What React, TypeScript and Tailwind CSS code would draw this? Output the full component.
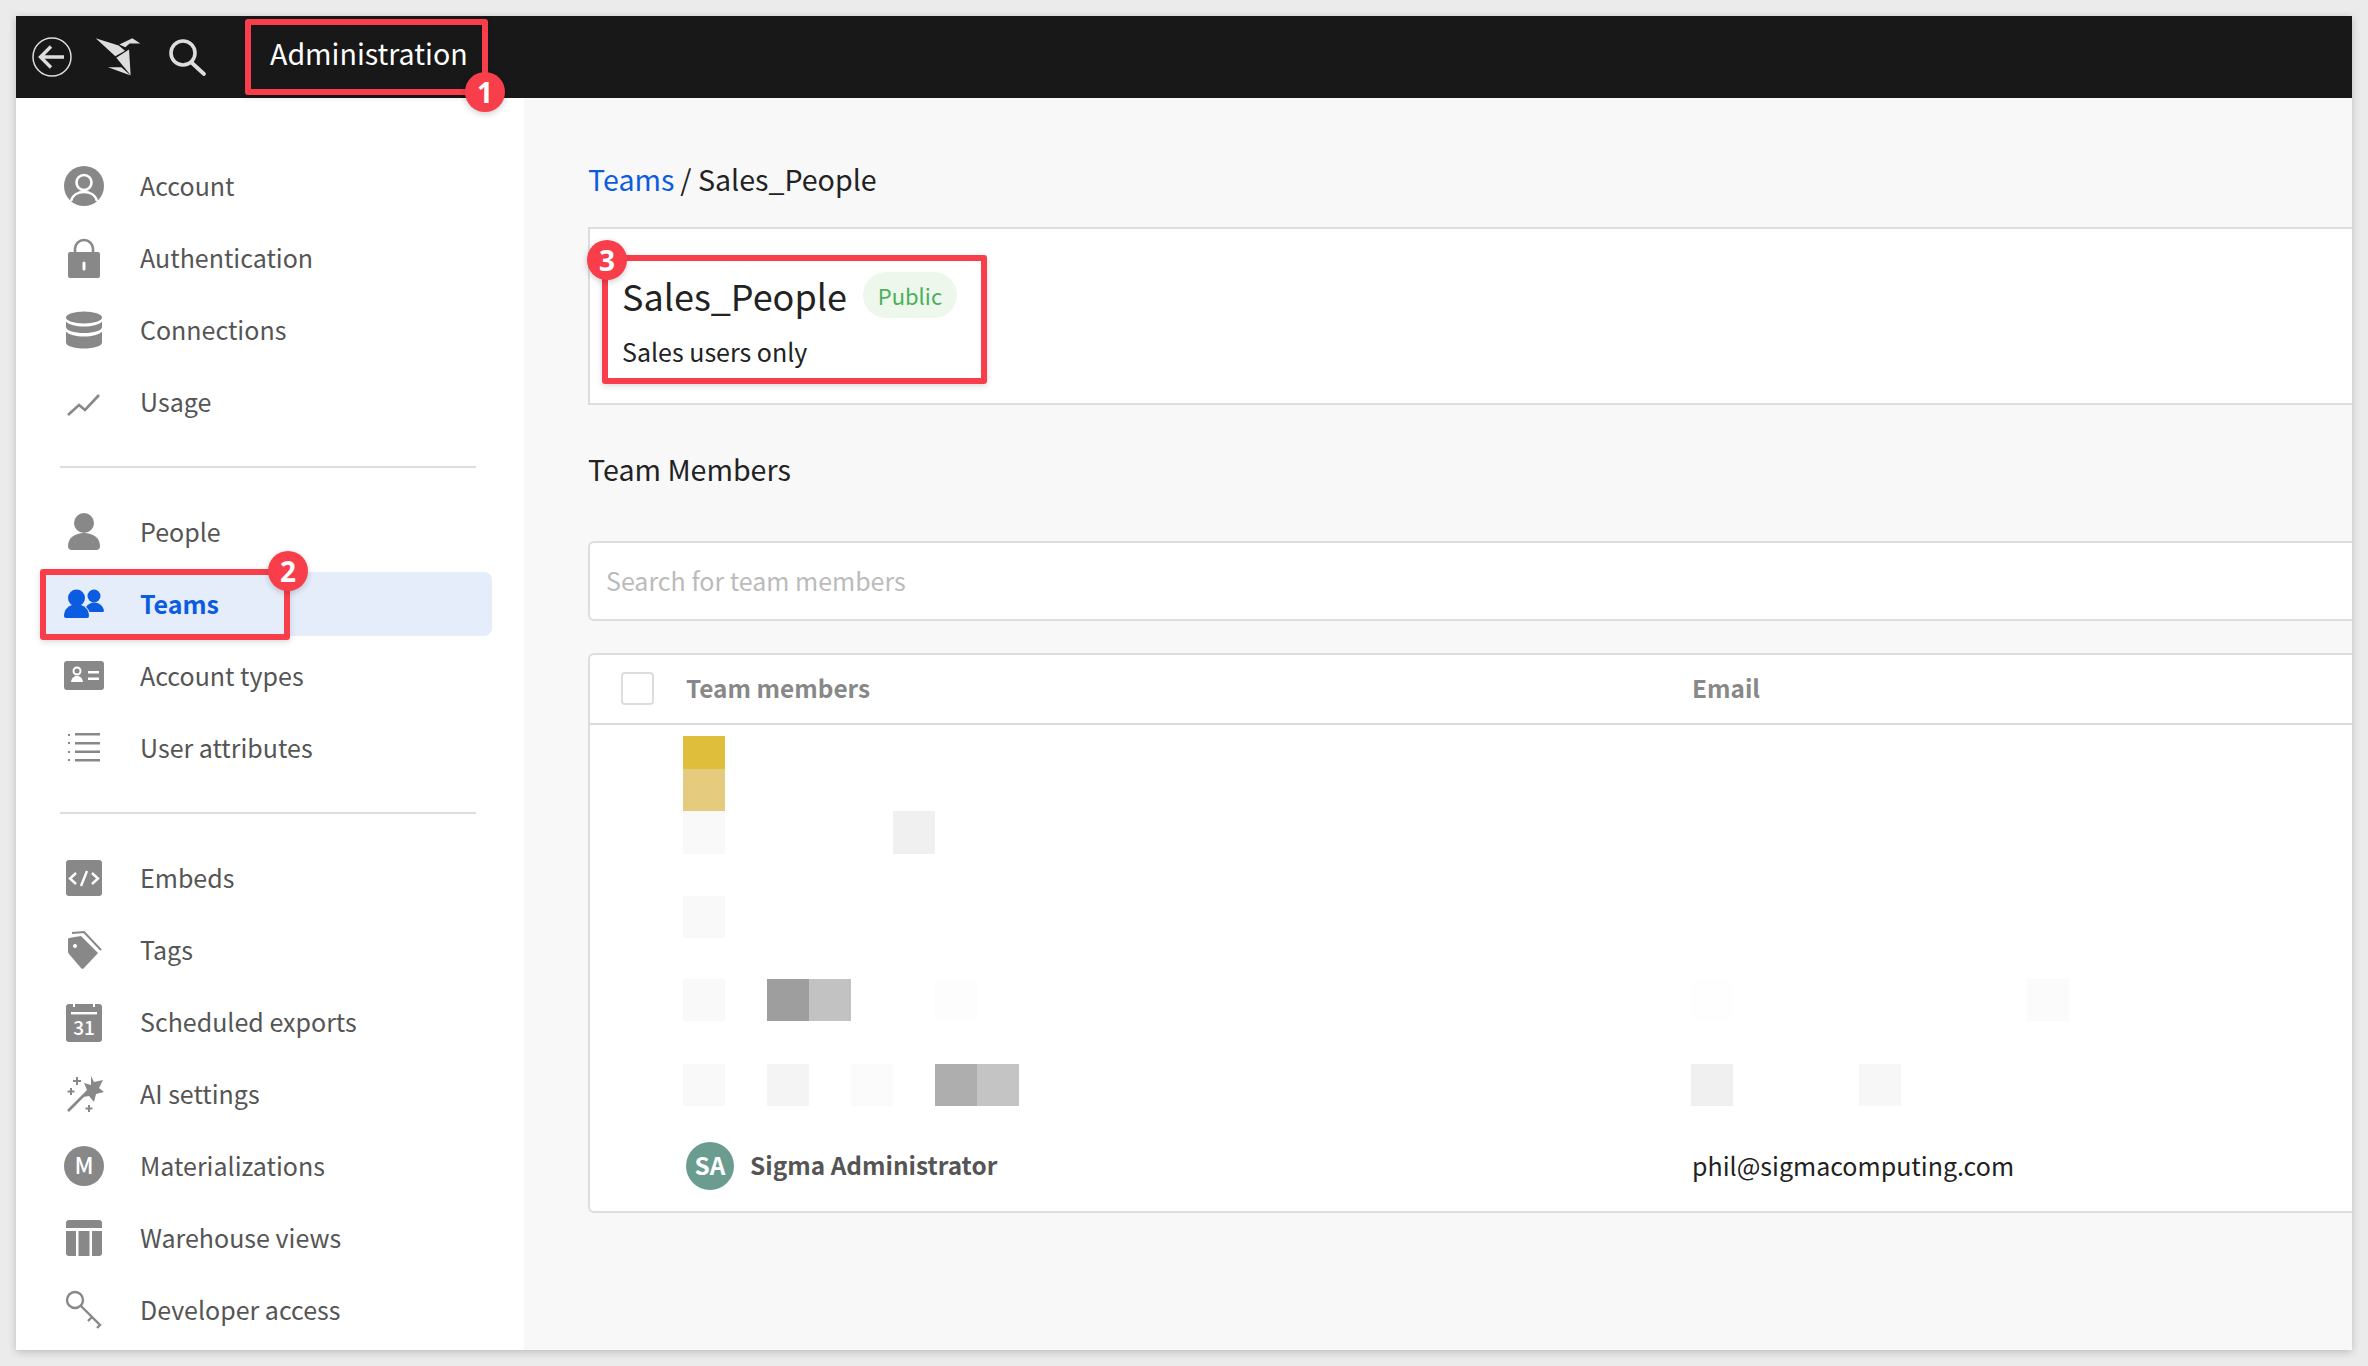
import type { ReactNode } from "react";

const FONT = "font-['Noto_Sans_CJK_SC','Source_Sans_Pro',sans-serif]";

function Ico({ children, h = 40 }: { children: ReactNode; h?: number }) {
  return (
    <svg width="40" height={h} viewBox={`0 0 40 ${h}`} className="shrink-0">
      {children}
    </svg>
  );
}

const GREY = "#888888";
const BLUE = "#0b5ce1";

const AccountIcon = () => (
  <Ico>
    <circle cx="20" cy="20" r="20" fill={GREY} />
    <circle cx="20" cy="16.5" r="7.5" fill="none" stroke="#fff" strokeWidth="2.6" />
    <path d="M7 35c1.5-6 7-9 13-9s11.500 3 13 9" fill="none" stroke="#fff" strokeWidth="2.6" />
  </Ico>
);

const LockIcon = () => (
  <Ico>
    <path d="M11 18v-7a9 9 0 0 1 18 0v7" fill="none" stroke={GREY} strokeWidth="2.6" />
    <path
      fillRule="evenodd"
      d="M6 14h28a2 2 0 0 1 2 2v22a2 2 0 0 1-2 2H6a2 2 0 0 1-2-2V16a2 2 0 0 1 2-2zm12.500 11v6a1.500 1.500 0 0 0 3 0v-6a1.500 1.500 0 0 0-3 0z"
      fill={GREY}
    />
  </Ico>
);

const DbIcon = () => (
  <Ico>
    <ellipse cx="20" cy="7.500" rx="18" ry="6" fill={GREY} />
    <path d="M2 11.500c3 3.500 10 5 18 5s15-1.500 18-5v5.500c0 3.500-8 6-18 6s-18-2.500-18-6z" fill={GREY} />
    <path d="M2 21.500c3 3.500 10 5 18 5s15-1.500 18-5v11c0 3.500-8 6-18 6s-18-2.500-18-6z" fill={GREY} />
  </Ico>
);

const UsageIcon = () => (
  <Ico>
    <path d="M4 33l11-10 6 5L35 13" fill="none" stroke={GREY} strokeWidth="2.6" />
  </Ico>
);

const PersonIcon = () => (
  <Ico h={38}>
    <circle cx="20" cy="10" r="10" fill={GREY} />
    <path d="M4 33c0-8 7-13 16-13s16 5 16 13a4 4 0 0 1-4 4H8a4 4 0 0 1-4-4z" fill={GREY} />
  </Ico>
);

const TeamIcon = () => (
  <Ico h={30}>
    <circle cx="30" cy="7" r="6.500" fill={BLUE} />
    <path d="M22 18c2-3 5-4.500 8-4.500 5 0 9 3 10 8a1.500 1.500 0 0 1-1.500 1.500H25.500c-.6-2-2-3.800-3.500-5z" fill={BLUE} />
    <circle cx="12.500" cy="9" r="8.500" fill={BLUE} />
    <path d="M0 27c0-7 5-11.500 12.500-11.500S25 20 25 27a2 2 0 0 1-2 2H2a2 2 0 0 1-2-2z" fill={BLUE} />
  </Ico>
);

const CardIcon = () => (
  <Ico h={30}>
    <rect x="0" y="0" width="40" height="29" rx="3" fill={GREY} />
    <circle cx="13" cy="10" r="3.500" fill="none" stroke="#fff" strokeWidth="2" />
    <path d="M7 21c.5-4 3-6 6-6s5.500 2 6 6z" fill="#fff" />
    <rect x="24" y="10" width="11" height="2.500" fill="#fff" />
    <rect x="24" y="16.500" width="11" height="2.500" fill="#fff" />
  </Ico>
);

const ListIcon = () => (
  <Ico h={32}>
    <g fill={GREY}>
      <rect x="4" y="2" width="2" height="2" />
      <rect x="4" y="10" width="2" height="2" />
      <rect x="4" y="19" width="2" height="2" />
      <rect x="4" y="27" width="2" height="2" />
      <rect x="11" y="1" width="25" height="2.500" />
      <rect x="11" y="10" width="25" height="2.500" />
      <rect x="11" y="18.500" width="25" height="2.500" />
      <rect x="11" y="27" width="25" height="2.500" />
    </g>
  </Ico>
);

const EmbedIcon = () => (
  <Ico>
    <rect x="2" y="2" width="36" height="36" rx="3" fill={GREY} />
    <path d="M12 15l-6 5.500 6 5.500M28 15l6 5.500-6 5.500M23 13l-6 15" fill="none" stroke="#fff" strokeWidth="2.400" />
  </Ico>
);

const TagIcon = () => (
  <Ico>
    <path d="M8 3l12-1 17 18" fill="none" stroke={GREY} strokeWidth="2" />
    <path
      fillRule="evenodd"
      d="M5 8l12-2 17 17-14 15a2 2 0 0 1-3 0L5 24a4 4 0 0 1-1-3V9zm6 6a2 2 0 1 0 .01 0z"
      fill={GREY}
    />
  </Ico>
);

const CalendarIcon = () => (
  <Ico>
    <path
      d="M5 2h4v3h2V2h18v3h2V2h4a3 3 0 0 1 3 3v32a3 3 0 0 1-3 3H5a3 3 0 0 1-3-3V5a3 3 0 0 1 3-3z"
      fill={GREY}
    />
    <rect x="7" y="10" width="26" height="2.400" fill="#fff" />
    <text x="20" y="33" textAnchor="middle" fontSize="19" fontWeight="500" fill="#fff" fontFamily="'Noto Sans CJK SC',sans-serif">
      31
    </text>
  </Ico>
);

const WandIcon = () => (
  <Ico>
    <path d="M4 37l21-21" stroke={GREY} strokeWidth="2.600" />
    <path d="M27 2l3 6 9-2-4 8 5 4-8 2-2 8-5-6-6 1 4-7-3-7 7 2z" fill={GREY} />
    <path d="M13 3v8M9 7h8M7 14v7M3.500 17.500h7M25 31v7M21.500 34.500h7" stroke={GREY} strokeWidth="2" />
  </Ico>
);

const MatIcon = () => (
  <Ico>
    <circle cx="20" cy="20" r="20" fill={GREY} />
    <text x="20" y="28" textAnchor="middle" fontSize="23" fontWeight="500" fill="#fff" fontFamily="'Noto Sans CJK SC',sans-serif">
      M
    </text>
  </Ico>
);

const TableIcon = () => (
  <Ico>
    <path d="M5 2h30a3 3 0 0 1 3 3v5H2V5a3 3 0 0 1 3-3z" fill={GREY} />
    <path d="M2 13h10v25H5a3 3 0 0 1-3-3z" fill={GREY} />
    <rect x="14.500" y="13" width="11" height="25" fill={GREY} />
    <path d="M28 13h10v22a3 3 0 0 1-3 3h-7z" fill={GREY} />
  </Ico>
);

const KeyIcon = () => (
  <Ico>
    <circle cx="11" cy="10" r="8" fill="none" stroke={GREY} strokeWidth="2.400" />
    <path d="M17 16l19 19-3 3M28 27l-4 4" fill="none" stroke={GREY} strokeWidth="2.400" />
  </Ico>
);

function NavItem({ icon, label, active }: { icon: ReactNode; label: string; active?: boolean }) {
  return (
    <div className="h-[72px] flex items-center">
      <div
        className={
          active
            ? "w-full h-16 pl-[23px] flex items-center gap-9 rounded-lg bg-[#e6edfa] text-[#0b5ce1] font-semibold"
            : "w-full h-16 pl-[23px] flex items-center gap-9 text-[#555555]"
        }
      >
        <span className="w-10 h-10 flex items-center justify-center">{icon}</span>
        <span className="pb-0.5">{label}</span>
      </div>
    </div>
  );
}

function Sidebar() {
  return (
    <aside className="w-[508px] shrink-0 bg-white pt-[52px] pl-[25px] pr-[32px] text-[25px] leading-none">
      <NavItem icon={<AccountIcon />} label="Account" />
      <NavItem icon={<LockIcon />} label="Authentication" />
      <NavItem icon={<DbIcon />} label="Connections" />
      <NavItem icon={<UsageIcon />} label="Usage" />
      <div className="h-0.5 bg-[#dddddd] ml-[19px] mr-4 my-7" />
      <NavItem icon={<PersonIcon />} label="People" />
      <NavItem icon={<TeamIcon />} label="Teams" active />
      <NavItem icon={<CardIcon />} label="Account types" />
      <NavItem icon={<ListIcon />} label="User attributes" />
      <div className="h-0.5 bg-[#dddddd] ml-[19px] mr-4 my-7" />
      <NavItem icon={<EmbedIcon />} label="Embeds" />
      <NavItem icon={<TagIcon />} label="Tags" />
      <NavItem icon={<CalendarIcon />} label="Scheduled exports" />
      <NavItem icon={<WandIcon />} label="AI settings" />
      <NavItem icon={<MatIcon />} label="Materializations" />
      <NavItem icon={<TableIcon />} label="Warehouse views" />
      <NavItem icon={<KeyIcon />} label="Developer access" />
    </aside>
  );
}

function TopBar() {
  return (
    <header className="h-[82px] shrink-0 bg-[#181818] flex items-center text-white">
      <svg width="40" height="40" viewBox="0 0 40 40" className="ml-4">
        <circle cx="20" cy="20" r="19" fill="none" stroke="#dddddd" strokeWidth="1.500" />
        <path d="M32 20H9M19 9.500L8.500 20 19 30.500" fill="none" stroke="#dddddd" strokeWidth="3.400" />
      </svg>
      {/* origami bird, traced from the reference at 3x */}
      <svg width="50" height="42" viewBox="220 40 150 125" className="ml-[21px]">
        <path d="M228 46l69 22 19 16-29 16z" fill="#dddddd" />
        <path d="M299 65l39-19 24 16h-32l-13 11z" fill="#dddddd" />
        <path d="M328 80l5 77-43-52z" fill="#dddddd" />
        <path d="M265 133h40l28 25z" fill="#dddddd" />
      </svg>
      <svg width="40" height="40" viewBox="0 0 40 40" className="ml-[25px]">
        <circle cx="15" cy="16" r="12" fill="none" stroke="#dddddd" strokeWidth="3.600" />
        <path d="M24 26l12 11" fill="none" stroke="#dddddd" strokeWidth="3.800" strokeLinecap="round" />
      </svg>
      <span className="ml-[62px] pb-2 text-[28.6px] leading-none">Administration</span>
    </header>
  );
}

const F9 = "bg-[#f9f9f9]";

const BLUR_ROWS: { h: string; cells: Record<number, string> }[] = [
  { h: "h-[33px]", cells: { 0: "bg-[#dfbe3c]" } },
  { h: "h-[42px]", cells: { 0: "bg-[#e5cb7e]" } },
  { h: "h-[43px]", cells: { 0: F9, 5: "bg-[#f0f0f0]" } },
  { h: "h-[42px]", cells: {} },
  { h: "h-[42px]", cells: { 0: F9 } },
  { h: "h-[41px]", cells: {} },
  {
    h: "h-[42px]",
    cells: { 0: F9, 2: "bg-[#9e9e9e]", 3: "bg-[#c2c2c2]", 6: "bg-[#fdfdfd]", 24: "bg-[#fefefe]", 32: "bg-[#fbfbfb]" },
  },
  { h: "h-[43px]", cells: {} },
  {
    h: "h-[42px]",
    cells: {
      0: F9,
      2: "bg-[#f4f4f4]",
      4: "bg-[#fbfbfb]",
      6: "bg-[#aeaeae]",
      7: "bg-[#c4c4c4]",
      24: "bg-[#f0f0f0]",
      28: "bg-[#f7f7f7]",
    },
  },
];

function BlurredRows() {
  return (
    <div className="pt-[11px] pl-[93px]">
      {BLUR_ROWS.map((row, i) => (
        <div key={i} className={`flex ${row.h}`}>
          {Array.from({ length: 33 }, (_, c) => (
            <div key={c} className={`w-[42px] shrink-0 ${row.cells[c] ?? ""}`} />
          ))}
        </div>
      ))}
    </div>
  );
}

function MembersTable() {
  return (
    <div className="mt-8 bg-white border-2 border-r-0 border-[#dddddd] rounded-l-md">
      <div className="h-[70px] flex items-center border-b-2 border-[#dddddd] text-[24.4px] font-semibold text-[#888888]">
        <div className="ml-[31px] w-[33px] h-[33px] bg-white border-2 border-[#dddddd] rounded" />
        <div className="ml-[32px] w-[1006px]">Team members</div>
        <div>Email</div>
      </div>
      <BlurredRows />
      <div className="h-[105px] flex items-center pt-[15px] text-[24.4px]">
        <div className="ml-[96px] w-12 h-12 rounded-full bg-[#6a9c90] text-white font-semibold flex items-center justify-center">
          SA
        </div>
        <div className="ml-4 w-[942px] font-semibold text-[#555555]">Sigma Administrator</div>
        <div className="text-[25px] text-[#222222]">phil@sigmacomputing.com</div>
      </div>
    </div>
  );
}

function Content() {
  return (
    <main className="flex-1 min-w-0 bg-[#f8f8f8] pl-16 text-[#222222]">
      <div className="mt-[63px] h-9 flex items-center text-[28.6px] leading-none">
        <span className="text-[#0b5ce1]">Teams</span>
        <span className="ml-1.5">/ Sales_People</span>
      </div>
      <section className="mt-[30px] h-[178px] bg-white border-2 border-r-0 border-[#dddddd] pl-8 pt-[38px]">
        <div className="flex items-center h-[56px]">
          <h1 className="text-[36px] leading-none font-normal">Sales_People</h1>
          <span className="ml-4 h-[46px] w-[94px] rounded-full bg-[#edf7ec] text-[#4caf5a] text-[22px] flex items-center justify-center">
            Public
          </span>
        </div>
        <p className="mt-4 text-[25px] leading-none">Sales users only</p>
      </section>
      <h2 className="mt-[50px] text-[28.6px] leading-none font-normal">Team Members</h2>
      <div className="mt-[57px] h-[80px] bg-white border-2 border-r-0 border-[#dddddd] rounded-l-md pl-4 flex items-center text-[25px] text-[#bbbbbb]">
        Search for team members
      </div>
      <MembersTable />
    </main>
  );
}

function Callout({ box, badge, n }: { box: string; badge: string; n: string }) {
  return (
    <>
      <div className={`absolute border-[6px] border-[#f93e4b] rounded-[3px] shadow-[0_2px_6px_rgba(0,0,0,0.15)] ${box}`} />
      <div
        className={`absolute w-10 h-10 rounded-full bg-[#f93e4b] text-white font-['Open_Sans',sans-serif] font-bold text-[28px] leading-none flex items-center justify-center shadow-[0_2px_6px_rgba(0,0,0,0.2)] ${badge}`}
      >
        {n}
      </div>
    </>
  );
}

export default function App() {
  return (
    <div className={`relative w-[2368px] h-[1366px] overflow-hidden bg-[#ebebeb] p-4 ${FONT}`}>
      <div className="h-[1334px] flex flex-col overflow-hidden shadow-[0_2px_8px_rgba(0,0,0,0.2)]">
        <TopBar />
        <div className="flex-1 min-h-0 flex">
          <Sidebar />
          <Content />
        </div>
      </div>
      <Callout box="left-[245px] top-[19px] w-[243px] h-[76px]" badge="left-[465px] top-[72px]" n="1" />
      <Callout box="left-[40px] top-[569px] w-[250px] h-[71px]" badge="left-[268px] top-[551px]" n="2" />
      <Callout box="left-[602px] top-[255px] w-[385px] h-[129px]" badge="left-[587px] top-[240px]" n="3" />
    </div>
  );
}
